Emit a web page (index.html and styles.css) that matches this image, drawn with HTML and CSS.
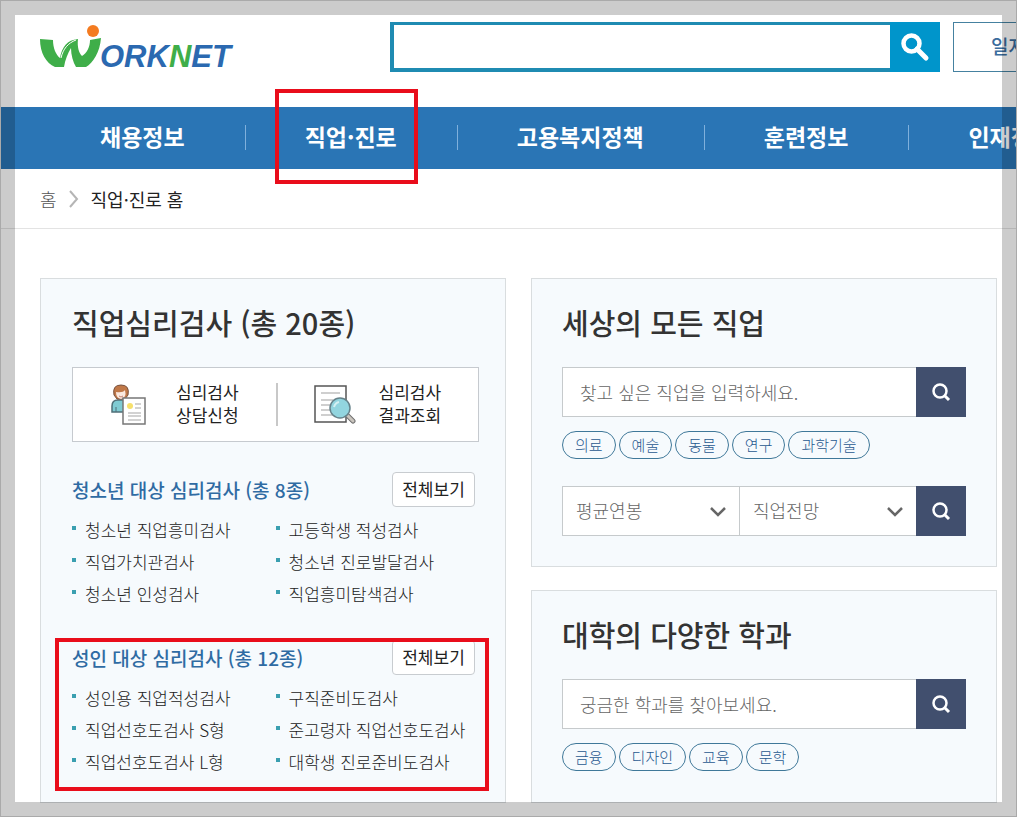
FILE: index.html
```html
<!DOCTYPE html>
<html lang="ko">
<head>
    <meta charset="UTF-8">
    <meta name="viewport" content="width=device-width, initial-scale=1.0">
    <title>직업·진로 홈 | 워크넷</title>
    <link rel="stylesheet" href="styles.css">
</head>
<body>
    <header class="header">
        <a class="logo" href="#" aria-label="WORKNET">
            <svg width="200" height="60" viewBox="0 0 200 60">
                <path d="M0 14 L13 15 C13 23 16 30 20 33 C22 22 27 15 38 14 C37 22 39 28 42 31 C47 28 50 22 50 15 L61 13 C60 27 53 38 46 42 L36 42 C33 37 31 30 31 23 C28 28 25 35 24 42 L15 42 C6 38 0 28 0 14 Z" fill="#3fae49"/>
                <path d="M21 33 C23 24 28 18 36 15" stroke="#fff" stroke-width="1" fill="none"/>
                <circle cx="53" cy="6" r="6" fill="#f47b20"/>
                <text class="logo-text" x="60" y="42">ORK<tspan class="logo-green">N</tspan>ET</text>
            </svg>
        </a>
        <form class="search">
            <label class="blind" for="search">통합검색</label>
            <input type="text" id="search" class="search-input">
            <button type="button" class="search-button" aria-label="검색">
                <svg width="30" height="30" viewBox="0 0 30 30">
                    <circle cx="11.500" cy="11.500" r="8" fill="none" stroke="#fff" stroke-width="4.500"/>
                    <path d="M17 17 L26 26" stroke="#fff" stroke-width="5" stroke-linecap="round"/>
                </svg>
            </button>
        </form>
        <a class="job-link" href="#">일자리찾기</a>
    </header>

    <nav class="nav">
        <ul class="nav-list">
            <li><a href="#">채용정보</a></li>
            <li><a href="#">직업·진로</a><span class="mark mark-nav"></span></li>
            <li><a href="#">고용복지정책</a></li>
            <li><a href="#">훈련정보</a></li>
            <li><a href="#">인재정보</a></li>
        </ul>
    </nav>

    <div class="breadcrumb">
        <a href="#">홈</a>
        <svg width="10" height="18" viewBox="0 0 10 18"><path d="M1 1 L8 9 L1 17" fill="none" stroke="#b5b5b5" stroke-width="2"/></svg>
        <strong>직업·진로 홈</strong>
    </div>

    <main class="main">
        <section class="panel panel-test">
            <h2>직업심리검사 (총 20종)</h2>
            <div class="quick">
                <a href="#">
                    <svg width="42" height="42" viewBox="0 0 42 42">
                        <path d="M1 28 V22 Q1 16 7 16 H13 Q18 17 18 22 V28 Z" fill="#7fcbd3" stroke="#4f6f78" stroke-width="1.500"/>
                        <path d="M5 23 V28" stroke="#4f6f78" stroke-width="1"/>
                        <path d="M3 11 Q1 1 10 1 Q19 1 17 11 L14 15 H6 Z" fill="#c07848" stroke="#77513e" stroke-width="1"/>
                        <path d="M5 8 Q12 9 14 6 Q16 14 10 15 Q5 14 5 8 Z" fill="#fbe9df"/>
                        <path d="M8 12 Q10 14 12 12" stroke="#c78373" fill="none"/>
                        <rect x="12" y="14" width="22" height="26" fill="#fff" stroke="#777" stroke-width="1.500"/>
                        <circle cx="19" cy="22" r="3" fill="#f6e06d"/>
                        <path d="M24 20 H30 M24 24 H30 M17 29 H30 M17 32 H30 M17 36 H30" stroke="#c4c4c4" stroke-width="1.500"/>
                    </svg>
                    <span>심리검사<br>상담신청</span>
                </a>
                <a href="#">
                    <svg width="42" height="42" viewBox="0 0 42 42">
                        <rect x="1" y="2" width="31" height="36" fill="#fff" stroke="#555" stroke-width="1.500"/>
                        <path d="M7 9 H26 M7 16 H19 M7 21 H17 M7 26 H17 M7 31 H20" stroke="#cfcfcf" stroke-width="2"/>
                        <path d="M32 30 L39 37" stroke="#6f6f6f" stroke-width="5" stroke-linecap="round"/>
                        <path d="M33 31 L39 37" stroke="#c9c4bd" stroke-width="3" stroke-linecap="round"/>
                        <circle cx="26" cy="24" r="10" fill="#92d5df" stroke="#66828a" stroke-width="1.500"/>
                        <path d="M20 23 Q21 19 25 18" stroke="#d4f0f3" stroke-width="2" fill="none"/>
                    </svg>
                    <span>심리검사<br>결과조회</span>
                </a>
            </div>

            <div class="test-group">
                <div class="test-head">
                    <h3>청소년 대상 심리검사 (총 8종)</h3>
                    <button type="button" class="all-button">전체보기</button>
                </div>
                <ul class="test-list">
                    <li><a href="#">청소년 직업흥미검사</a></li>
                    <li><a href="#">고등학생 적성검사</a></li>
                    <li><a href="#">직업가치관검사</a></li>
                    <li><a href="#">청소년 진로발달검사</a></li>
                    <li><a href="#">청소년 인성검사</a></li>
                    <li><a href="#">직업흥미탐색검사</a></li>
                </ul>
            </div>

            <div class="test-group">
                <div class="test-head">
                    <h3>성인 대상 심리검사 (총 12종)</h3>
                    <button type="button" class="all-button">전체보기</button>
                </div>
                <ul class="test-list">
                    <li><a href="#">성인용 직업적성검사</a></li>
                    <li><a href="#">구직준비도검사</a></li>
                    <li><a href="#">직업선호도검사 S형</a></li>
                    <li><a href="#">준고령자 직업선호도검사</a></li>
                    <li><a href="#">직업선호도검사 L형</a></li>
                    <li><a href="#">대학생 진로준비도검사</a></li>
                </ul>
                <span class="mark mark-test"></span>
            </div>
        </section>

        <div class="column">
            <section class="panel">
                <h2>세상의 모든 직업</h2>
                <form class="field-row">
                    <label class="blind" for="job">직업 검색</label>
                    <input type="text" id="job" placeholder="찾고 싶은 직업을 입력하세요.">
                    <button type="button" class="find-button" aria-label="직업 검색">
                        <svg width="20" height="20" viewBox="0 0 20 20"><circle cx="9" cy="9" r="6.500" fill="none" stroke="#fff" stroke-width="2.500"/><path d="M13.500 13.500 L18 18" stroke="#fff" stroke-width="3"/></svg>
                    </button>
                </form>
                <div class="tags">
                    <a href="#">의료</a>
                    <a href="#">예술</a>
                    <a href="#">동물</a>
                    <a href="#">연구</a>
                    <a href="#">과학기술</a>
                </div>
                <form class="field-row field-select">
                    <div class="select-box">
                        <label class="blind" for="salary">평균연봉</label>
                        <select id="salary"><option>평균연봉</option></select>
                        <svg width="18" height="12" viewBox="0 0 18 12"><path d="M2 2 L9 9 L16 2" fill="none" stroke="#666" stroke-width="2.500"/></svg>
                    </div>
                    <div class="select-box">
                        <label class="blind" for="outlook">직업전망</label>
                        <select id="outlook"><option>직업전망</option></select>
                        <svg width="18" height="12" viewBox="0 0 18 12"><path d="M2 2 L9 9 L16 2" fill="none" stroke="#666" stroke-width="2.500"/></svg>
                    </div>
                    <button type="button" class="find-button" aria-label="조건 검색">
                        <svg width="20" height="20" viewBox="0 0 20 20"><circle cx="9" cy="9" r="6.500" fill="none" stroke="#fff" stroke-width="2.500"/><path d="M13.500 13.500 L18 18" stroke="#fff" stroke-width="3"/></svg>
                    </button>
                </form>
            </section>

            <section class="panel panel-major">
                <h2>대학의 다양한 학과</h2>
                <form class="field-row">
                    <label class="blind" for="major">학과 검색</label>
                    <input type="text" id="major" placeholder="궁금한 학과를 찾아보세요.">
                    <button type="button" class="find-button" aria-label="학과 검색">
                        <svg width="20" height="20" viewBox="0 0 20 20"><circle cx="9" cy="9" r="6.500" fill="none" stroke="#fff" stroke-width="2.500"/><path d="M13.500 13.500 L18 18" stroke="#fff" stroke-width="3"/></svg>
                    </button>
                </form>
                <div class="tags">
                    <a href="#">금융</a>
                    <a href="#">디자인</a>
                    <a href="#">교육</a>
                    <a href="#">문학</a>
                </div>
            </section>
        </div>
    </main>
    <div class="frame"></div>
</body>
</html>
```

FILE: styles.css
```css
* {
    box-sizing: border-box;
}
body {
    margin: 0;
    font-family: "Noto Sans CJK KR", sans-serif;
    font-size: 17px;
    font-weight: 300;
    color: #222;
    background: #fff;
}
a {
    color: inherit;
    text-decoration: none;
}
ul, h2, h3 {
    margin: 0;
    padding: 0;
    list-style: none;
}
input, select, button {
    font-family: inherit;
    font-weight: inherit;
    margin: 0;
    border-radius: 0;
}
button {
    cursor: pointer;
}
svg {
    display: block;
}
.blind {
    position: absolute;
    width: 1px;
    height: 1px;
    overflow: hidden;
    clip-path: inset(50%);
}

/* header */
.header {
    display: grid;
    grid-template-columns: 337px 1fr 64px;
    gap: 13px;
    height: 107px;
    padding: 22px 0 0 40px;
    overflow: hidden;
}
.logo {
    padding-top: 3px;
}
.logo-text {
    font-family: "Liberation Sans", Arial, sans-serif;
    font-size: 31px;
    font-weight: bold;
    font-style: italic;
    fill: #2b69b0;
}
.logo-green {
    fill: #3fae49;
}
.search {
    display: flex;
    height: 50px;
}
.search-input {
    flex: 1;
    min-width: 0;
    padding: 0 12px;
    font-size: 18px;
    border: 4px solid #1f8bb2;
    border-top-width: 3px;
    border-right: 0;
}
.search-button {
    display: flex;
    align-items: center;
    justify-content: center;
    width: 50px;
    padding: 0;
    border: 0;
    background: #0095cb;
}
.job-link {
    width: 160px;
    height: 50px;
    padding-left: 37px;
    border: 1px solid #4581a0;
    color: #3b6c9d;
    font-size: 19px;
    font-weight: 500;
    line-height: 46px;
    white-space: nowrap;
}

/* nav */
.nav {
    background: #2a75b5;
    overflow-x: clip;
}
.nav-list {
    display: flex;
    height: 62px;
    padding-left: 41px;
}
.nav-list li {
    position: relative;
    display: flex;
    flex-shrink: 0;
}
.nav-list li + li::before {
    content: "";
    width: 1px;
    height: 25px;
    margin-top: 18px;
    background: #7fb0dc;
}
.nav-list a {
    padding: 0 60px 0 59px;
    color: #fff;
    font-size: 23px;
    font-weight: bold;
    line-height: 59px;
    white-space: nowrap;
}
.mark {
    position: absolute;
    border: 4px solid #e90d1b;
    pointer-events: none;
}
.mark-nav {
    top: -18px;
    bottom: -15px;
    left: 30px;
    right: 39px;
}
.mark-test {
    top: -2px;
    bottom: -13px;
    left: -17px;
    right: -10px;
}

.breadcrumb {
    display: flex;
    align-items: center;
    gap: 12px;
    height: 60px;
    padding-left: 40px;
    border-bottom: 1px solid #e3e3e3;
    font-size: 18px;
    line-height: 24px;
    color: #555;
}
.breadcrumb strong {
    color: #222;
    font-weight: 400;
}

/* content */
.main {
    display: grid;
    grid-template-columns: 1fr 1fr;
    gap: 25px;
    padding: 49px 20px 14px 40px;
}
.column {
    display: flex;
    flex-direction: column;
    gap: 23px;
}
.panel {
    padding: 22px 30px 30px;
    border: 1px solid #d9dddf;
    background: #f6fafd;
}
.panel-test {
    padding: 22px 26px 24px 31px;
}
.panel-major {
    flex: 1;
}
.panel h2 {
    margin-bottom: 24px;
    color: #333;
    font-size: 29px;
    font-weight: 500;
    line-height: 42px;
}
.quick {
    display: grid;
    grid-template-columns: 1fr 1fr;
    padding: 15px 0;
    border: 1px solid #c6cacf;
    background: #fff;
}
.quick a {
    display: flex;
    align-items: center;
    gap: 23px;
    height: 43px;
    padding-left: 38px;
    font-weight: 400;
    line-height: 23px;
}
.quick span {
    padding-bottom: 3px;
}
.quick a + a {
    border-left: 2px solid #c8c8c8;
    padding-left: 36px;
}
.test-group {
    position: relative;
    margin-top: 30px;
}
.test-head {
    display: flex;
    align-items: center;
    justify-content: space-between;
    margin-bottom: 7px;
    padding-right: 4px;
}
.test-head h3 {
    color: #2f6ba3;
    font-size: 19px;
    font-weight: 500;
    line-height: 28px;
}
.all-button {
    width: 83px;
    height: 35px;
    padding: 0 0 2px;
    border: 1px solid #c8ccd0;
    border-radius: 4px;
    background: #fff;
    color: #222;
    font-size: 17px;
    font-weight: 400;
}
.test-list {
    display: grid;
    grid-template-columns: 1fr 1fr;
}
.test-list li {
    display: flex;
    align-items: center;
    gap: 9px;
    line-height: 32px;
    white-space: nowrap;
}
.test-list li::before {
    content: "";
    width: 4px;
    height: 4px;
    margin-bottom: 4px;
    background: #3a9fb0;
}

/* search panels */
.field-row {
    display: flex;
    height: 50px;
}
.field-row input {
    flex: 1;
    min-width: 0;
    padding: 0 17px;
    border: 1px solid #c6cacc;
    border-right: 0;
    background: #fff;
    font-size: 18px;
}
.field-row input::placeholder {
    color: #666;
}
.find-button {
    display: flex;
    align-items: center;
    justify-content: center;
    width: 50px;
    padding: 0;
    border: 0;
    background: #414f6e;
}
.field-select {
    margin-top: 27px;
}
.select-box {
    position: relative;
    flex: 1;
}
.select-box select {
    width: 100%;
    height: 50px;
    padding: 0 13px 2px;
    border: 1px solid #c6cacc;
    border-right: 0;
    background: #fff;
    color: #666;
    font-size: 18px;
    appearance: none;
}
.select-box svg {
    position: absolute;
    top: 20px;
    right: 12px;
    pointer-events: none;
}
.tags {
    display: flex;
    gap: 3px;
    margin-top: 14px;
}
.tags a {
    height: 28px;
    padding: 0 12px;
    border: 1px solid #3f7899;
    border-radius: 14px;
    color: #1f588f;
    font-size: 15px;
    line-height: 25px;
}

/* dimmed edge around the window */
.frame {
    position: fixed;
    inset: 0;
    border: 15px solid rgba(0, 0, 0, 0.2);
    outline: 1px solid #aaa;
    outline-offset: -1px;
    pointer-events: none;
}
```
